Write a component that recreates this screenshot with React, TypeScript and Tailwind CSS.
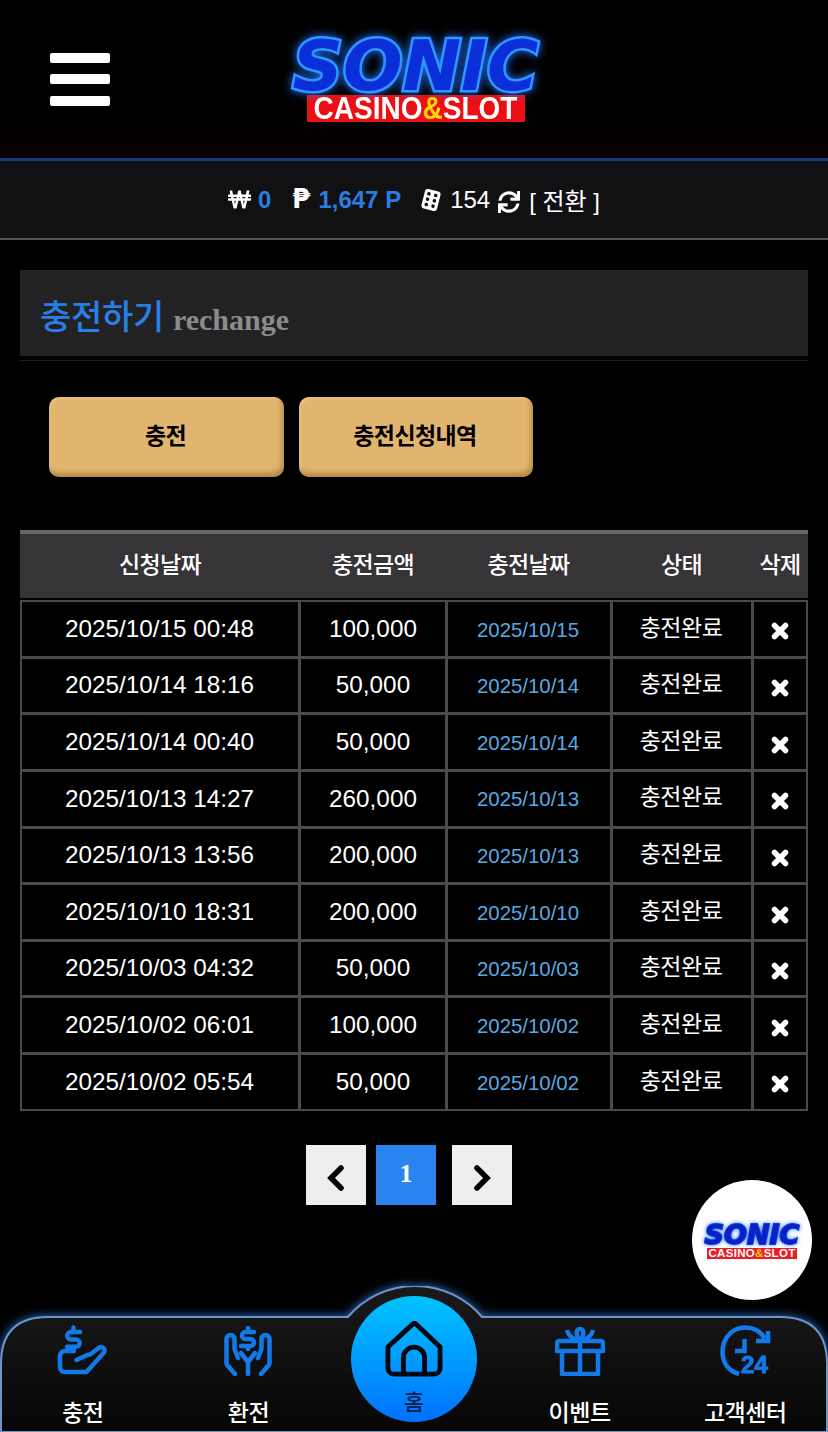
import { FaSync, FaWonSign } from "react-icons/fa";

const ko = "font-['Liberation_Sans','Noto_Sans_CJK_KR',sans-serif]";

const rows = [
  ["2025/10/15 00:48", "100,000", "2025/10/15"],
  ["2025/10/14 18:16", "50,000", "2025/10/14"],
  ["2025/10/14 00:40", "50,000", "2025/10/14"],
  ["2025/10/13 14:27", "260,000", "2025/10/13"],
  ["2025/10/13 13:56", "200,000", "2025/10/13"],
  ["2025/10/10 18:31", "200,000", "2025/10/10"],
  ["2025/10/03 04:32", "50,000", "2025/10/03"],
  ["2025/10/02 06:01", "100,000", "2025/10/02"],
  ["2025/10/02 05:54", "50,000", "2025/10/02"],
];

const cols = "grid-cols-[276px_144px_162px_138px_52px]";

function IconCharge() {
  return (
    <svg width="56" height="56" viewBox="0 0 56 56" fill="none" stroke="#1279e8" strokeWidth="4.500" strokeLinecap="round" strokeLinejoin="round">
      <path d="M25 9h-9a3.600 3.600 0 0 0 0 7.400h5a3.600 3.600 0 0 1 0 7.400h-9" />
      <path d="M18.500 4.500v4M18.500 24v4" />
      <path d="M19 28h-8.500a5 5 0 0 0-5.500 5v11a5 5 0 0 0 5 5h21.500l17-19a3.500 3.500 0 0 0-5-5l-7 5.500a7 7 0 0 1-4 1.500l-11 5" />
    </svg>
  );
}

function IconExchange() {
  return (
    <svg width="50" height="50" viewBox="0 0 50 50" fill="none" stroke="#1279e8" strokeWidth="4.500" strokeLinecap="round" strokeLinejoin="round">
      <path d="M31 6h-8.500a3 3 0 0 0 0 7h5a3 3 0 0 1 0 7H18" />
      <path d="M25 2v3M25 20v3" />
      <path d="M12 48l-7-8a4 4 0 0 1-1.500-4V13a4 4 0 0 1 8 0v10l3.500 9M38 48l7-8a4 4 0 0 0 1.500-4V13a4 4 0 0 0-8 0v10l-3.500 9" />
      <path d="M25 48V36l-7-9M25 36l7-9" />
    </svg>
  );
}

function IconGift() {
  return (
    <svg width="50" height="50" viewBox="0 0 50 50" fill="none" stroke="#1279e8" strokeWidth="4.500" strokeLinejoin="round">
      <path d="M4 15h42a2 2 0 0 1 2 2v8H2v-8a2 2 0 0 1 2-2z" />
      <path d="M7 25v23h36V25" />
      <path d="M25 15v33" />
      <path d="M25 15c-4-5-5-12 0-12s4 7 0 12z" />
      <path d="M25 15C18 14 13 9 12 4M25 15c7-1 12-6 13-11" />
    </svg>
  );
}

function IconClock24() {
  return (
    <svg width="52" height="52" viewBox="0 0 52 52" fill="none" stroke="#1279e8" strokeWidth="4.500" className="overflow-visible">
      <path d="M20 49C9 46 3.500 37 3.500 27 3.500 13 13.500 2.500 26 2.500c8 0 15 3 20 11" />
      <path d="M49 6v10H37" />
      <path d="M25.500 14v12H16" />
      <text x="22" y="48" fontSize="23" fontWeight="900" fill="#1279e8" stroke="#1279e8" strokeWidth="0.800" fontFamily="'Liberation Sans', sans-serif" textLength="27" lengthAdjust="spacingAndGlyphs">
        24
      </text>
    </svg>
  );
}

function IconDice() {
  return (
    <svg width="22" height="22" viewBox="0 0 22 22" className="rotate-[14deg]">
      <rect x="3" y="1" width="16" height="20" rx="3" fill="#fff" />
      <g fill="#111113">
        <circle cx="7.500" cy="5.500" r="1.800" />
        <circle cx="14.500" cy="5.500" r="1.800" />
        <circle cx="7.500" cy="11" r="1.800" />
        <circle cx="14.500" cy="11" r="1.800" />
        <circle cx="7.500" cy="16.500" r="1.800" />
        <circle cx="14.500" cy="16.500" r="1.800" />
      </g>
    </svg>
  );
}

function IconX() {
  return (
    <svg width="18" height="18" viewBox="0 0 18 18" fill="none" stroke="#fff" strokeWidth="5.500" strokeLinecap="round">
      <path d="M3.500 3.500l11 11M14.500 3.500l-11 11" />
    </svg>
  );
}

function Chevron({ dir }: { dir: "left" | "right" }) {
  return (
    <svg width="18" height="26" viewBox="0 0 18 26" fill="none" stroke="#000" strokeWidth="5.500" strokeLinecap="round" strokeLinejoin="miter">
      <path d={dir === "left" ? "M14 3L4 13l10 10" : "M4 3l10 10L4 23"} />
    </svg>
  );
}

function NavItem({ label, icon }: { label: string; icon: React.ReactNode }) {
  return (
    <div className="flex flex-col items-center">
      <div className="flex h-[56px] items-center justify-center">{icon}</div>
      <span className={`mt-[19px] text-[23px] leading-[30px] font-medium tracking-[-0.5px] text-white ${ko}`}>{label}</span>
    </div>
  );
}

export default function App() {
  return (
    <div className={`relative h-[1432px] w-[828px] overflow-hidden bg-black text-white ${ko}`}>
      {/* header */}
      <header className="flex h-[161px] items-center border-b-[3px] border-[#16357f] bg-gradient-to-b from-black from-60% to-[#0c0002] pl-[50px]">
        <div className="flex w-[60px] flex-col gap-[11.500px]">
          <span className="h-[10px] rounded-[2px] bg-white" />
          <span className="h-[10px] rounded-[2px] bg-white" />
          <span className="h-[10px] rounded-[2px] bg-white" />
        </div>
        <div className="mb-[2px] ml-[178px] flex w-[255px] flex-col items-center">
          <span className="mt-[3px] font-['DejaVu_Sans',sans-serif] text-[70px] leading-[58px] font-bold tracking-[0px] whitespace-nowrap text-[#0a2ed8] italic drop-shadow-[0_0_5px_#1f6fff] [-webkit-text-stroke:5px_#2f95ff] [paint-order:stroke_fill]">
            SONIC
          </span>
          <span className="flex h-[27px] w-[218px] items-center justify-center bg-[#ec0f13] font-['Liberation_Sans',sans-serif] text-[28px] font-bold text-white">
            <span className="inline-block scale-y-[1.100]">
              CASINO<span className="text-[#ffd800]">&amp;</span>SLOT
            </span>
          </span>
        </div>
      </header>

      {/* balance bar */}
      <div className="flex h-[79px] items-center justify-center border-b-2 border-[#555] bg-[#111113] text-[24px]">
        <FaWonSign className="mr-[7px] text-[23px] text-white" />
        <span className="mr-[21px] font-bold text-[#2a7de1]">0</span>
        <span className="mr-[8px] font-['DejaVu_Sans',sans-serif] text-[26px] font-bold">₱</span>
        <span className="mr-[19px] font-bold text-[#2a7de1]">1,647 P</span>
        <IconDice />
        <span className="mr-[8px] ml-[8px]">154</span>
        <FaSync className="mt-[4px] mr-[9px] text-[22px]" />
        <span className="mt-[4px] text-[24px]">[ 전환 ]</span>
      </div>

      <main className="px-[20px] pt-[30px]">
        {/* title */}
        <div className="flex h-[86px] items-center gap-[9px] bg-[#222225] pt-[8px] pl-[20px]">
          <span className="text-[34px] font-medium tracking-[-0.300px] text-[#2a7fe6]">충전하기</span>
          <span className="mt-[5px] font-['Liberation_Serif',serif] text-[30px] font-bold text-[#8b8b8b]">rechange</span>
        </div>
        <div className="mt-[4px] h-px bg-[#1f1f1f]" />

        {/* buttons */}
        <div className="mt-[36px] flex gap-[15px] pl-[29px]">
          <button className="h-[80px] w-[235px] rounded-[10px] bg-[#e2b56e] pr-[2px] pb-[2px] text-[23px] font-bold tracking-[-0.600px] text-black shadow-[inset_-2px_-4px_5px_rgba(120,80,20,0.45),inset_2px_2px_3px_rgba(255,230,180,0.25)]">
            충전
          </button>
          <button className="h-[80px] w-[234px] rounded-[10px] bg-[#e2b56e] pr-[2px] pb-[2px] text-[23px] font-bold tracking-[-0.600px] text-black shadow-[inset_-2px_-4px_5px_rgba(120,80,20,0.45),inset_2px_2px_3px_rgba(255,230,180,0.25)]">
            충전신청내역
          </button>
        </div>

        {/* table */}
        <div className="mt-[53px] flex h-[68px] items-center border-t-4 border-[#666] bg-[#363436] pb-[2px] text-[23px] font-medium tracking-[-0.600px]">
          <span className="w-[280px] text-center">신청날짜</span>
          <span className="w-[146px] text-center">충전금액</span>
          <span className="w-[165px] text-center">충전날짜</span>
          <span className="w-[141px] text-center">상태</span>
          <span className="w-[56px] text-center">삭제</span>
        </div>
        <div className="mt-[2px] flex flex-col gap-[3px] bg-[#4a4a4a] p-[2px]">
          {rows.map((r, i) => (
            <div key={i} className={`grid h-[53.650px] gap-[3px] ${cols}`}>
              <div className="flex items-center justify-center bg-black pr-[1px] text-[24.300px]">{r[0]}</div>
              <div className="flex items-center justify-center bg-black text-[24.300px]">{r[1]}</div>
              <div className="flex items-center justify-center bg-black pt-[2px] pr-[2px] text-[20.400px] text-[#5aa9e0]">{r[2]}</div>
              <div className="flex items-center justify-center bg-black pr-[2px] pb-[2px] text-[23px] tracking-[-0.500px]">충전완료</div>
              <div className="flex items-center justify-center bg-black pt-[5px]">
                <IconX />
              </div>
            </div>
          ))}
        </div>

        {/* pagination */}
        <div className="mt-[34px] flex pl-[286px]">
          <button className="flex h-[60px] w-[60px] items-center justify-center bg-[#eeeeee] pt-[6px]">
            <Chevron dir="left" />
          </button>
          <button className="ml-[10px] h-[60px] w-[60px] bg-[#2a84f0] pb-[2px] font-['Liberation_Serif',serif] text-[26px] font-bold text-white">
            1
          </button>
          <button className="ml-[16px] flex h-[60px] w-[60px] items-center justify-center bg-[#eeeeee] pt-[6px]">
            <Chevron dir="right" />
          </button>
        </div>
      </main>

      {/* floating logo */}
      <div className="absolute top-[1180px] left-[692px] flex h-[120px] w-[120px] flex-col items-center justify-center rounded-full bg-white">
        <span className="mt-[2px] font-['DejaVu_Sans',sans-serif] text-[27px] leading-[24px] font-bold text-[#0a1fc4] italic drop-shadow-[0_0_2px_#3a7bff] [-webkit-text-stroke:2px_#0a3fe0] [paint-order:stroke_fill]">
          SONIC
        </span>
        <span className="mt-[1px] flex h-[11px] w-[90px] items-center justify-center bg-[#ec1c24] font-['Liberation_Sans',sans-serif] text-[11.500px] font-bold tracking-[0.300px] text-white">
          CASINO<span className="text-[#ffc800]">&amp;</span>SLOT
        </span>
      </div>

      {/* bottom nav */}
      <nav className="absolute inset-x-0 bottom-0 h-[146px]">
        <svg width="828" height="146" viewBox="0 0 828 146" className="absolute inset-0 drop-shadow-[0_0_5px_#2a6fd0]">
          <defs>
            <linearGradient id="navbg" x1="0" y1="0" x2="0" y2="1">
              <stop offset="0" stopColor="#1a1a1c" />
              <stop offset="1" stopColor="#060606" />
            </linearGradient>
          </defs>
          <path d="M1 146V78Q1 31 48 31H348A88 88 0 0 1 482 31H780Q827 31 827 78V146Z" fill="url(#navbg)" stroke="#6f95c8" strokeWidth="2" />
        </svg>
        <div className="absolute top-[10px] left-[351px] flex h-[126px] w-[126px] flex-col items-center rounded-full bg-gradient-to-b from-[#00c3ff] to-[#0070ff] pt-[25px]">
          <svg width="58" height="56" viewBox="0 0 60 58" fill="none" stroke="#02070f" strokeWidth="5" strokeLinejoin="round" strokeLinecap="round">
            <path d="M3 27 29 3 a2 2 0 0 1 3 0 L57 27 V49 a6 6 0 0 1-6 6 H9 a6 6 0 0 1-6-6z" />
            <path d="M19 55V38a11 11 0 0 1 22 0v17" />
          </svg>
          <span className="mt-[12px] text-[22px] leading-[28px] font-medium text-[#03204a]">홈</span>
        </div>
        <div className="relative grid grid-cols-5 pt-[37px]">
          <NavItem label="충전" icon={<IconCharge />} />
          <NavItem label="환전" icon={<IconExchange />} />
          <div />
          <NavItem label="이벤트" icon={<IconGift />} />
          <NavItem label="고객센터" icon={<IconClock24 />} />
        </div>
      </nav>
    </div>
  );
}
